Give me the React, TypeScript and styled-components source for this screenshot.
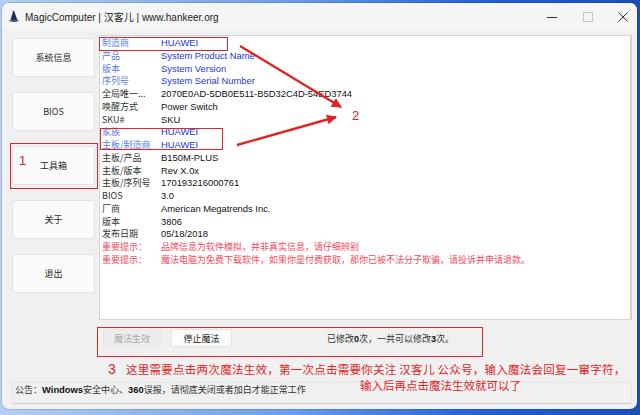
import React from 'react';
import styled, { createGlobalStyle } from 'styled-components';

const GlobalStyle = createGlobalStyle`
  html, body {
    margin: 0;
    padding: 0;
    background: #1f5fcf;
  }
  * {
    box-sizing: border-box;
  }
`;

const UI_FONT = `'Liberation Sans', 'Noto Sans CJK SC', sans-serif`;
const CJK_FONT = `'Noto Sans CJK SC', 'Liberation Sans', sans-serif`;
const RED = '#e02424';

const Desktop = styled.div`
  position: relative;
  width: 640px;
  height: 415px;
  overflow: hidden;
  padding: 3px 3px 6px 2px;
  background: linear-gradient(90deg, #b4cff2 0%, #6a9fe8 45%, #2262d2 75%, #1b4fb8 100%);
  font-family: ${UI_FONT};
`;

const Window = styled.div`
  height: 100%;
  display: flex;
  flex-direction: column;
  background: #f0f0f0;
  border-radius: 7px;
  overflow: hidden;
  box-shadow: 0 0 0 1px rgba(0, 0, 0, 0.12);
`;

const TitleBar = styled.div`
  height: 27px;
  display: flex;
  align-items: center;
  padding-left: 6px;
  background: #f5f5f5;
`;

const Title = styled.span`
  margin-left: 5px;
  font-size: 10px;
  color: #1c1c1c;
  white-space: nowrap;
`;

const Controls = styled.div`
  margin-left: auto;
  display: flex;
  gap: 15.5px;
  padding-right: 4px;
`;

const CtrlButton = styled.div`
  width: 20px;
  height: 20px;
  display: flex;
  align-items: center;
  justify-content: center;
`;

const Body = styled.div`
  flex: 1;
  display: flex;
  flex-direction: column;
  padding: 5px 5px 5px 10px;
`;

const Content = styled.div`
  display: grid;
  grid-template-columns: 83px 1fr;
  column-gap: 4px;
`;

const Nav = styled.div`
  display: flex;
  flex-direction: column;
  gap: 15px;
  padding-top: 3px;
`;

const NavButton = styled.div`
  height: 39px;
  display: flex;
  align-items: center;
  justify-content: center;
  background: #fafafa;
  border: 1px solid #e3e3e3;
  border-radius: 2px;
  font-family: ${CJK_FONT};
  font-size: 9px;
  color: #2a2a2a;
`;

const Main = styled.div`
  display: flex;
  flex-direction: column;
`;

const ListPanel = styled.div`
  height: 285px;
  background: #fff;
  border: 1px solid #d6d6d6;
  border-right: 2px solid #d2d2d2;
  padding: 1px 0 0 2px;
`;

type Tone = 'blue' | 'normal' | 'red';

const labelColor: Record<Tone, string> = {
  blue: '#5a7ee2',
  normal: '#333',
  red: '#ee4a5c',
};

const valueColor: Record<Tone, string> = {
  blue: '#2438d2',
  normal: '#111',
  red: '#ee4a5c',
};

const Row = styled.div`
  display: grid;
  grid-template-columns: 59px 1fr;
  height: 12.75px;
  line-height: 12.75px;
  font-size: 9px;
  white-space: nowrap;
`;

const Label = styled.span<{ $tone: Tone }>`
  color: ${(p) => labelColor[p.$tone]};
  font-family: ${CJK_FONT};
`;

const Value = styled.span<{ $tone: Tone }>`
  color: ${(p) => valueColor[p.$tone]};
  font-family: ${(p) => (p.$tone === 'red' ? CJK_FONT : UI_FONT)};
  font-size: ${(p) => (p.$tone === 'red' ? '9px' : '9.4px')};
`;

const ControlRow = styled.div`
  margin-top: 9px;
  height: 18px;
  display: flex;
  align-items: center;
  padding-left: 4px;
  gap: 10px;
`;

const MagicButton = styled.div<{ $disabled?: boolean }>`
  width: ${(p) => (p.$disabled ? '58px' : '61px')};
  height: 18px;
  display: flex;
  align-items: center;
  justify-content: center;
  font-family: ${CJK_FONT};
  font-size: 9px;
  color: ${(p) => (p.$disabled ? '#a9a9a9' : '#222')};
  background: ${(p) => (p.$disabled ? '#ececec' : '#fbfbfb')};
  border: 1px solid ${(p) => (p.$disabled ? '#e6e6e6' : '#e4e4e4')};
  border-radius: 2px;
`;

const Counter = styled.span`
  margin-left: 85px;
  font-family: ${CJK_FONT};
  font-size: 9px;
  color: #333;

  b {
    font-family: ${UI_FONT};
    color: #111;
  }
`;

const StatusBar = styled.div`
  margin-top: auto;
  height: 22px;
  padding: 0 2px;
  border: 1px solid #e4e4e4;
  border-bottom: 1px solid #cfcfcf;
  font-family: ${CJK_FONT};
  font-size: 9px;
  line-height: 14px;
  color: #333;

  b {
    font-family: ${UI_FONT};
    font-size: 9.4px;
    color: #111;
  }
`;

/* annotation overlay drawn over the screenshot */
const Overlay = styled.div`
  position: absolute;
  inset: 0;
  pointer-events: none;
`;

const MarkBox = styled.div`
  position: absolute;
  border: 1.5px solid #d8282e;
`;

const Number = styled.div`
  position: absolute;
  font-family: ${UI_FONT};
  font-size: 13px;
  line-height: 14px;
  color: ${RED};
`;

const Note = styled.div<{ $spread?: number }>`
  position: absolute;
  font-family: ${CJK_FONT};
  font-size: 11.5px;
  line-height: 16px;
  letter-spacing: ${(p) => p.$spread ?? 0}px;
  color: ${RED};
  white-space: nowrap;

  span {
    font-family: ${UI_FONT};
    font-size: 14px;
    margin-right: 10px;
  }
`;

const rows: [string, string, Tone][] = [
  ['制造商', 'HUAWEI', 'blue'],
  ['产品', 'System Product Name', 'blue'],
  ['版本', 'System Version', 'blue'],
  ['序列号', 'System Serial Number', 'blue'],
  ['全局唯一...', '2070E0AD-5DB0E511-B5D32C4D-54ED3744', 'normal'],
  ['唤醒方式', 'Power Switch', 'normal'],
  ['SKU#', 'SKU', 'normal'],
  ['家族', 'HUAWEI', 'blue'],
  ['主板/制造商', 'HUAWEI', 'blue'],
  ['主板/产品', 'B150M-PLUS', 'normal'],
  ['主板/版本', 'Rev X.0x', 'normal'],
  ['主板/序列号', '170193216000761', 'normal'],
  ['BIOS', '3.0', 'normal'],
  ['厂商', 'American Megatrends Inc.', 'normal'],
  ['版本', '3806', 'normal'],
  ['发布日期', '05/18/2018', 'normal'],
  ['重要提示：', '品牌信息为软件模拟，并非真实信息，请仔细辨别', 'red'],
  [
    '重要提示：',
    '魔法电脑为免费下载软件，如果你是付费获取，那你已被不法分子欺骗，请投诉并申请退款。',
    'red',
  ],
];

const navItems = ['系统信息', 'BIOS', '工具箱', '关于', '退出'];

const HatIcon = () => (
  <svg width="12" height="13" viewBox="0 0 12 13">
    <path d="M5.2 0.5 C4.6 3 3.6 6.5 2.4 10.2 L9.6 10.2 C8.4 7.6 7.6 5 7 3.2 C6.6 2 6.2 1 5.2 0.5 Z" fill="#1d2d5c" />
    <path d="M0.6 10.6 C2.5 12.3 9.5 12.3 11.4 10.6 C9 10 3 10 0.6 10.6 Z" fill="#2b3f78" />
  </svg>
);

const Arrows = () => (
  <svg width="640" height="415" style={{ position: 'absolute', left: 0, top: 0 }}>
    <defs>
      <marker id="head" viewBox="0 0 10 10" refX="9" refY="5" markerWidth="4.2" markerHeight="4.2" orient="auto">
        <path d="M0 0 L10 5 L0 10 Z" fill={RED} />
      </marker>
    </defs>
    <line x1="240" y1="46" x2="341" y2="107" stroke={RED} strokeWidth="2.4" markerEnd="url(#head)" />
    <line x1="237" y1="145" x2="336" y2="117" stroke={RED} strokeWidth="2.4" markerEnd="url(#head)" />
  </svg>
);

export default function App() {
  return (
    <>
      <GlobalStyle />
      <Desktop>
        <Window>
          <TitleBar>
            <HatIcon />
            <Title>MagicComputer | 汉客儿 | www.hankeer.org</Title>
            <Controls>
              <CtrlButton>
                <svg width="10" height="10" viewBox="0 0 10 10">
                  <line x1="0" y1="5.5" x2="10" y2="5.5" stroke="#333" strokeWidth="1" />
                </svg>
              </CtrlButton>
              <CtrlButton>
                <svg width="10" height="10" viewBox="0 0 10 10">
                  <rect x="0.5" y="0.5" width="9" height="9" fill="none" stroke="#c6c6c6" strokeWidth="1" />
                </svg>
              </CtrlButton>
              <CtrlButton>
                <svg width="10" height="10" viewBox="0 0 10 10">
                  <path d="M0.5 0.5 L9.5 9.5 M9.5 0.5 L0.5 9.5" stroke="#333" strokeWidth="1" />
                </svg>
              </CtrlButton>
            </Controls>
          </TitleBar>
          <Body>
            <Content>
              <Nav>
                {navItems.map((n) => (
                  <NavButton key={n}>{n}</NavButton>
                ))}
              </Nav>
              <Main>
                <ListPanel>
                  {rows.map(([label, value, tone], i) => (
                    <Row key={i}>
                      <Label $tone={tone}>{label}</Label>
                      <Value $tone={tone}>{value}</Value>
                    </Row>
                  ))}
                </ListPanel>
                <ControlRow>
                  <MagicButton $disabled>魔法生效</MagicButton>
                  <MagicButton>停止魔法</MagicButton>
                  <Counter>
                    已修改<b>0</b>次，一共可以修改<b>3</b>次。
                  </Counter>
                </ControlRow>
              </Main>
            </Content>
            <StatusBar>
              公告：<b>Windows</b>安全中心、<b>360</b>误报，请彻底关闭或者加白才能正常工作
            </StatusBar>
          </Body>
        </Window>
        <Overlay>
          <MarkBox style={{ left: 99, top: 37, width: 129, height: 14 }} />
          <MarkBox style={{ left: 100, top: 128, width: 123, height: 22 }} />
          <MarkBox style={{ left: 10, top: 143, width: 88, height: 46 }} />
          <MarkBox style={{ left: 97, top: 327, width: 386, height: 30 }} />
          <Arrows />
          <Number style={{ left: 19, top: 154 }}>1</Number>
          <Number style={{ left: 352, top: 109 }}>2</Number>
          <Note $spread={0.26} style={{ left: 108, top: 361 }}>
            <span>3</span>这里需要点击两次魔法生效，第一次点击需要你关注 汉客儿 公众号，输入魔法会回复一窜字符，
          </Note>
          <Note style={{ left: 360, top: 377 }}>输入后再点击魔法生效就可以了</Note>
        </Overlay>
      </Desktop>
    </>
  );
}
